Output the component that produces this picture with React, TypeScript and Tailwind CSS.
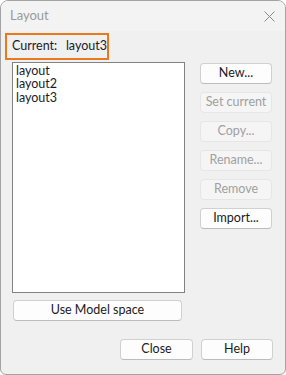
import React from "react";

const font = { fontFamily: 'Lato, "Noto Sans", "Liberation Sans", sans-serif' };

function Btn({ label, disabled, w = "w-[72px]" }: { label: string; disabled?: boolean; w?: string }) {
  return (
    <div
      className={
        "h-[21px] shrink-0 rounded-[4px] border flex items-center justify-center text-[12.5px] leading-none " +
        w +
        " " +
        (disabled
          ? "bg-[#f5f5f5] border-[#e6e6e6] text-[#a0a0a0]"
          : "bg-[#fdfdfd] border-[#d0d0d0] border-b-[#bcbcbc] text-[#1b1b1b]")
      }
    >
      {label}
    </div>
  );
}

export default function App() {
  return (
    <div
      className="w-[286px] h-[375px] border border-[#a3a3a3] rounded-t-[8px] rounded-b-[6px] bg-[#f0f0f0] overflow-hidden flex flex-col text-[#1a1a2a]"
      style={font}
    >
      <div className="h-[30px] shrink-0 bg-[#f3f3f3] flex items-center justify-between pl-[9px] pr-[10px]">
        <span className="text-[13px] text-[#9a9a9a]">Layout</span>
        <svg width="11" height="11" viewBox="0 0 11 11">
          <path d="M0.5 0.5 L10.5 10.5 M10.5 0.5 L0.5 10.5" stroke="#8a8a8a" strokeWidth="1" />
        </svg>
      </div>
      <div className="flex flex-col">
        <div className="ml-[4px] mt-[2px] w-[104px] h-[27px] border-2 border-[#e8791c] flex items-center pl-[5px] text-[12.5px]">
          <span className="w-[55px]">Current:</span>
          <span>layout3</span>
        </div>
        <div className="flex mt-[2px]">
          <div className="ml-[11px] w-[173px] h-[231px] border border-[#828282] bg-white pl-[3px] pt-[1px] text-[12.5px] leading-[13.4px] flex flex-col">
            <span>layout</span>
            <span>layout2</span>
            <span>layout3</span>
          </div>
          <div className="ml-[15px] mt-[1px] flex flex-col gap-[8px]">
            <Btn label="New..." />
            <Btn label="Set current" disabled />
            <Btn label="Copy..." disabled />
            <Btn label="Rename..." disabled />
            <Btn label="Remove" disabled />
            <Btn label="Import..." />
          </div>
        </div>
        <div className="ml-[12px] mt-[7px]">
          <Btn label="Use Model space" w="w-[169px]" />
        </div>
        <div className="mt-[18px] flex justify-end gap-[8px] pr-[12px]">
          <Btn label="Close" w="w-[73px]" />
          <Btn label="Help" />
        </div>
      </div>
    </div>
  );
}
